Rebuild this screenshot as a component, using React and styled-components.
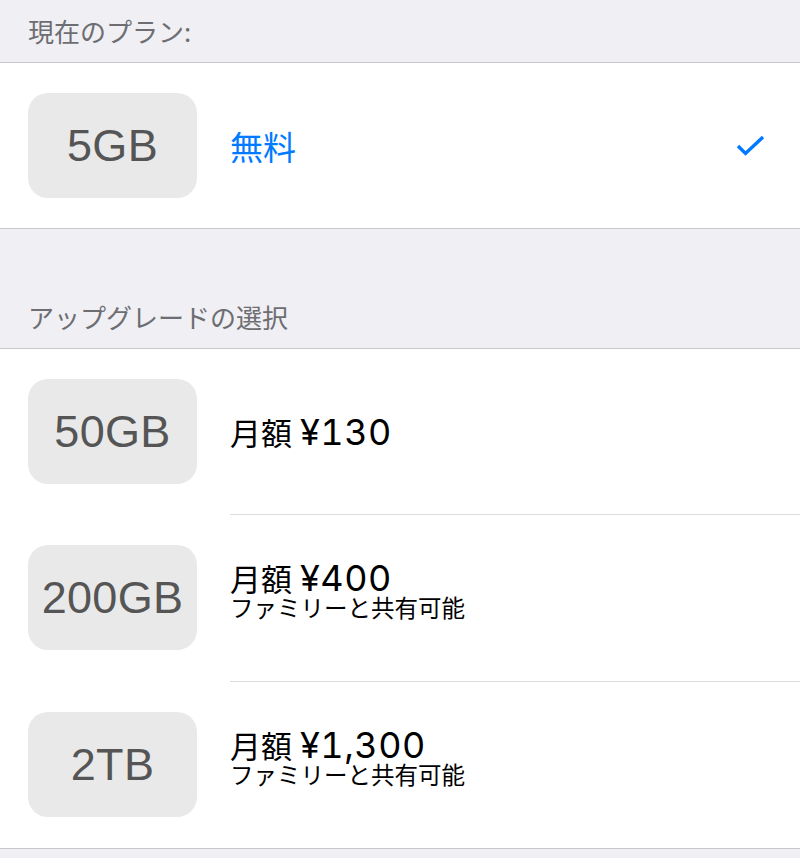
import styled, { createGlobalStyle } from "styled-components";

const GlobalStyle = createGlobalStyle`
  html, body {
    margin: 0;
    padding: 0;
    background: #efeff4;
  }
  body {
    font-family: "Inter", "Noto Sans CJK JP", sans-serif;
  }
`;

const plans = [
  { size: "50GB", amount: "¥130" },
  { size: "200GB", amount: "¥400", note: "ファミリーと共有可能" },
  { size: "2TB", amount: "¥1,300", note: "ファミリーと共有可能" },
];

const Check = () => (
  <svg width="30" height="24" viewBox="0 0 30 24">
    <polyline
      points="2,12 9.5,19.5 27,3"
      fill="none"
      stroke="#007aff"
      strokeWidth="3.4"
    />
  </svg>
);

const App = () => {
  return (
    <>
      <GlobalStyle />
      <Page>
        <SectionHeader $top={16}>現在のプラン:</SectionHeader>
        <Group>
          <Row>
            <Badge>5GB</Badge>
            <Content>
              <FreeLabel>無料</FreeLabel>
              <Check />
            </Content>
          </Row>
        </Group>

        <SectionHeader $top={73}>アップグレードの選択</SectionHeader>
        <Group>
          {plans.map((plan, i) => (
            <Row key={plan.size} $divided={i > 0}>
              <Badge>{plan.size}</Badge>
              <Content $divided={i > 0}>
                <TextStack $hasNote={!!plan.note}>
                  <Price>
                    <Kanji>月額</Kanji>
                    <Amount>{plan.amount}</Amount>
                  </Price>
                  {plan.note && <Note>{plan.note}</Note>}
                </TextStack>
              </Content>
            </Row>
          ))}
        </Group>
        <Footer />
      </Page>
    </>
  );
};

const Page = styled.div`
  width: 800px;
  background: #efeff4;
`;

const SectionHeader = styled.div`
  padding: ${(p) => p.$top}px 28px 16px;
  font-family: "Noto Sans CJK JP", sans-serif;
  font-size: 26px;
  line-height: 30px;
  color: #6d6d72;
`;

const Group = styled.div`
  background: #fff;
  border-top: 1px solid #c8c7cc;
  border-bottom: 1px solid #c8c7cc;
`;

const Row = styled.div`
  display: flex;
  align-items: stretch;
  padding-left: 28px;
  min-height: ${(p) => (p.$divided ? 167 : 165)}px;
`;

const Badge = styled.div`
  flex: none;
  align-self: center;
  width: 169px;
  height: 105px;
  border-radius: 20px;
  background: #e9e9e9;
  display: flex;
  align-items: center;
  justify-content: center;
  font-family: "Liberation Sans", Arial, sans-serif;
  font-size: 45px;
  letter-spacing: 0.3px;
  color: #555;
`;

const Content = styled.div`
  flex: 1;
  margin-left: 33px;
  padding-right: 34px;
  display: flex;
  align-items: center;
  justify-content: space-between;
  border-top: ${(p) => (p.$divided ? "1px solid #dcdce0" : "none")};
`;

const FreeLabel = styled.span`
  font-family: "Noto Sans CJK JP", sans-serif;
  font-size: 33px;
  color: #007aff;
`;

const TextStack = styled.div`
  display: flex;
  flex-direction: column;
  padding-bottom: ${(p) => (p.$hasNote ? 16 : 0)}px;
`;

const Price = styled.div`
  display: flex;
  align-items: baseline;
  gap: 8px;
  color: #000;
  white-space: nowrap;
`;

const Kanji = styled.span`
  font-family: "Noto Sans CJK JP", sans-serif;
  font-size: 31px;
  line-height: 34px;
`;

const Amount = styled.span`
  font-family: "Inter", sans-serif;
  font-size: 36px;
  line-height: 34px;
  letter-spacing: 0.5px;
  font-variant-numeric: tabular-nums;
`;

const Note = styled.div`
  font-family: "Noto Sans CJK JP", sans-serif;
  font-size: 23.5px;
  line-height: 24px;
  color: #000;
  white-space: nowrap;
`;

const Footer = styled.div`
  height: 12px;
`;

export default App;
